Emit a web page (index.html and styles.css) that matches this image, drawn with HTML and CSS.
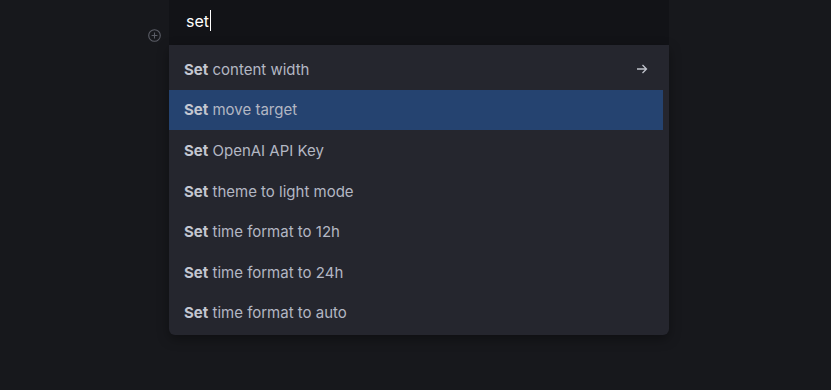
FILE: index.html
```html
<!DOCTYPE html>
<html lang="en">
<head>
    <meta charset="UTF-8">
    <title>Command palette</title>
    <link rel="stylesheet" href="styles.css">
</head>
<body>
    <div class="editor">
        <div class="gutter">
            <svg class="add-icon" width="13" height="13" viewBox="0 0 13 13">
                <circle cx="6.5" cy="6.5" r="5.8" fill="none" stroke="currentColor" stroke-width="1.1"/>
                <path d="M6.5 3.6v5.8M3.6 6.5h5.8" stroke="currentColor" stroke-width="1.1"/>
            </svg>
        </div>
        <div class="palette">
            <div class="search">
                <span class="query">set</span><span class="caret"></span>
            </div>
            <ul class="results">
                <li class="item"><span><b>Set</b> content width</span>
                    <svg class="arrow" width="12" height="12" viewBox="0 0 12 12">
                        <path d="M1 6h9.5M6.5 2l4 4-4 4" fill="none" stroke="currentColor" stroke-width="1.3"/>
                    </svg>
                </li>
                <li class="item selected"><span><b>Set</b> move target</span></li>
                <li class="item"><span><b>Set</b> OpenAI API Key</span></li>
                <li class="item"><span><b>Set</b> theme to light mode</span></li>
                <li class="item"><span><b>Set</b> time format to 12h</span></li>
                <li class="item"><span><b>Set</b> time format to 24h</span></li>
                <li class="item"><span><b>Set</b> time format to auto</span></li>
            </ul>
        </div>
    </div>
</body>
</html>
```

FILE: styles.css
```css
body {
    margin: 0;
    height: 390px;
    background-color: #17181c;
    font-family: Inter, "Noto Sans", sans-serif;
    overflow: hidden;
}
.editor {
    display: flex;
    padding-left: 148px;
}
.gutter {
    width: 21px;
    padding-top: 29px;
}
.add-icon {
    display: block;
    color: #5b5d66;
}
.palette {
    width: 500px;
}
.search {
    height: 45px;
    display: flex;
    align-items: center;
    padding-left: 17px;
    padding-bottom: 4px;
    box-sizing: border-box;
    background-color: #121317;
}
.query {
    color: #ffffff;
    font-size: 16px;
}
.caret {
    width: 1px;
    height: 21px;
    margin-left: 1px;
    background-color: #ffffff;
}
.results {
    list-style: none;
    margin: 0;
    padding: 4px 6px 2px 0;
    background-color: #25262e;
    border-radius: 0 0 6px 6px;
    box-shadow: 0 4px 12px rgba(0,0,0,0.35);
}
.item {
    height: 40.6px;
    display: flex;
    align-items: center;
    justify-content: space-between;
    padding: 0 15px;
    font-size: 15px;
    color: #b3b7c3;
}
.item b {
    font-weight: 700;
    color: #c3c7d1;
}
.item.selected {
    background-color: #254370;
}
.arrow {
    color: #c0c3cc;
    margin-right: 0;
}
```
